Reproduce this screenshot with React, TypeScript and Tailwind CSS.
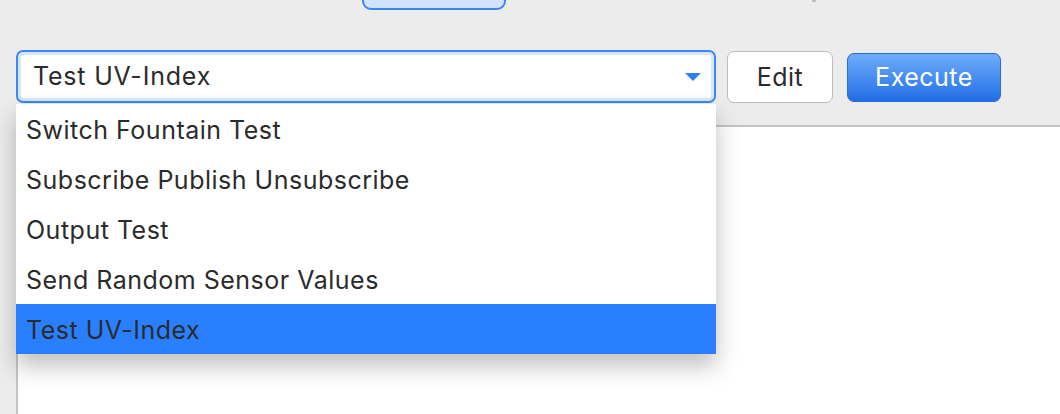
const items = [
  "Switch Fountain Test",
  "Subscribe Publish Unsubscribe",
  "Output Test",
  "Send Random Sensor Values",
  "Test UV-Index",
];

const selected = "Test UV-Index";

export default function App() {
  return (
    <div
      className="relative h-[414px] w-[1060px] overflow-hidden bg-[#ececec] text-[#2b2b2b]"
      style={{ fontFamily: "Inter, 'Liberation Sans', sans-serif" }}
    >
      {/* segmented control peeking from the top */}
      <div className="flex h-[50px] items-start">
        <div className="ml-[362px] -mt-[10px] h-[20px] w-[144px] rounded-b-[9px] border-2 border-[#3b87f2] bg-[#cfe3fc]" />
        <div className="ml-[306px] h-[2px] w-[4px] rounded-full bg-[#b8b8b8]" />
      </div>

      {/* toolbar */}
      <div className="flex h-[75px] items-start gap-[11px] pl-[16px] text-[25px] tracking-[0.5px]">
        <div className="relative w-[700px]">
          <div className="flex h-[53px] items-center justify-between rounded-[7px] border-2 border-[#3a88f4] bg-white pl-[15px] pr-[12px] shadow-[inset_0_0_0_3px_#d4e7fc]">
            <span className="leading-none tracking-[0.8px]">{selected}</span>
            <svg width="18" height="10" viewBox="0 0 18 10">
              <path d="M1 1 L17 1 L9 9 Z" fill="#2f80f3" />
            </svg>
          </div>

          {/* open dropdown */}
          <div className="absolute left-0 top-[54px] z-10 w-[700px] bg-white shadow-[0_12px_22px_rgba(0,0,0,0.25)]">
            {items.map((item) => (
              <div
                key={item}
                className={`flex h-[50px] items-center pt-[2px] pl-[10px] leading-none ${
                  item === selected ? "bg-[#2a7fff]" : ""
                }`}
              >
                {item}
              </div>
            ))}
          </div>
        </div>

        <button className="mt-[1px] flex h-[52px] w-[106px] items-center justify-center rounded-[7px] border border-[#bdbdbd] bg-white leading-none text-[#2b2b2b]">
          Edit
        </button>
        <button className="mt-[3px] ml-[3px] flex h-[49px] w-[154px] items-center justify-center rounded-[7px] border border-[#2a6ad4] bg-gradient-to-b from-[#6eabf9] to-[#1f6ee6] leading-none text-white">
          Execute
        </button>
      </div>

      {/* content panel */}
      <div className="ml-[16px] h-[300px] border-l-2 border-t-2 border-[#c4c4c4] bg-white" />
    </div>
  );
}
